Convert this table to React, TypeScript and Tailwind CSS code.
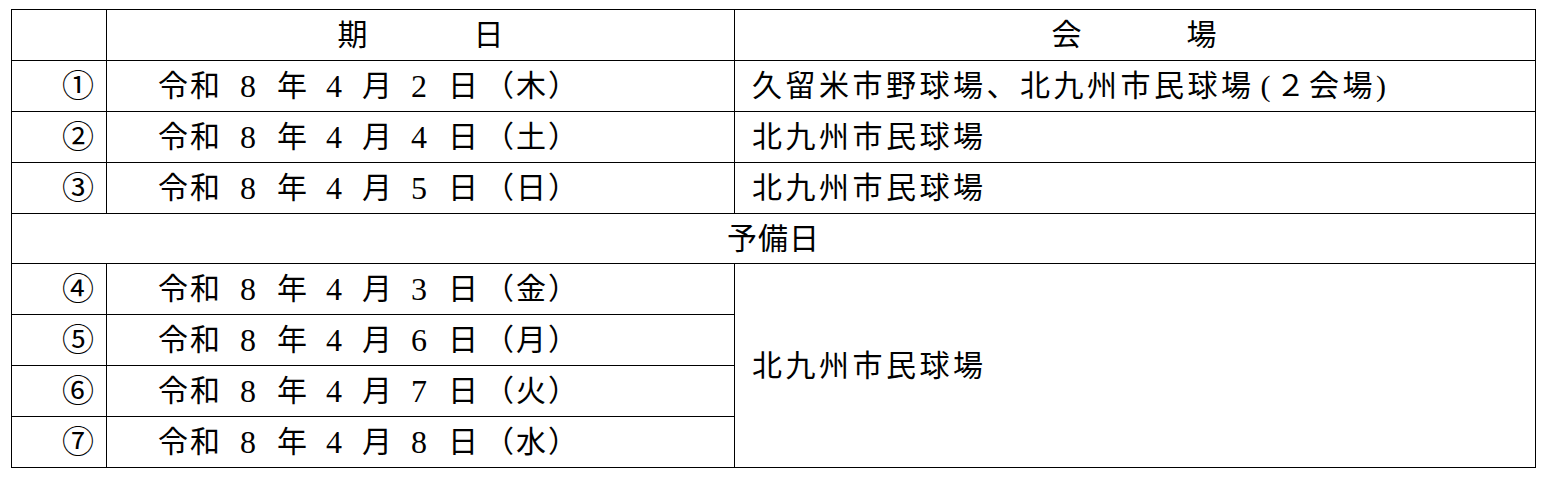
import React from 'react';

type Row = { no: string; day: string; wd: string };

const mainRows: (Row & { venue: React.ReactNode })[] = [
  {
    no: '①',
    day: '2',
    wd: '木',
    venue: (
      <>
        久留米市野球場、北九州市民球場<span className="ml-[6px] tracking-[5px]">(</span>２会場<span>)</span>
      </>
    ),
  },
  { no: '②', day: '4', wd: '土', venue: '北九州市民球場' },
  { no: '③', day: '5', wd: '日', venue: '北九州市民球場' },
];

const spareRows: Row[] = [
  { no: '④', day: '3', wd: '金' },
  { no: '⑤', day: '6', wd: '月' },
  { no: '⑥', day: '7', wd: '火' },
  { no: '⑦', day: '8', wd: '水' },
];

const K = ({ c, className = '' }: { c: string; className?: string }) => (
  <span className={`inline-block w-[32px] text-center ${className}`}>{c}</span>
);
const D = ({ c, className = '' }: { c: string; className?: string }) => (
  <span className={`inline-block w-[16px] text-center text-[32px] ${className}`}>{c}</span>
);

function DateText({ day, wd }: { day: string; wd: string }) {
  return (
    <div className="flex items-center pl-[50px] whitespace-nowrap">
      <K c="令" />
      <K c="和" />
      <D c="8" className="ml-[19px]" />
      <K c="年" className="ml-[20px]" />
      <D c="4" className="ml-[18px]" />
      <K c="月" className="ml-[19px]" />
      <D c={day} className="ml-[18px]" />
      <K c="日" className="ml-[20px]" />
      <K c="（" className="ml-[4px]" />
      <K c={wd} />
      <K c="）" />
    </div>
  );
}

function NoCell({ no }: { no: string }) {
  return (
    <td className="border border-black text-right pr-[12px] text-[32px] leading-none">{no}</td>
  );
}

export default function App() {
  return (
    <div className="w-[1546px] h-[482px] bg-white text-black font-['Liberation_Serif','Noto_Sans_CJK_JP',serif] text-[30px] leading-none">
      <div className="pt-[9px] pl-[11px]">
        <table className="border-collapse table-fixed w-[1524px]">
          <colgroup>
            <col className="w-[95px]" />
            <col className="w-[628px]" />
            <col className="w-[801px]" />
          </colgroup>
          <tbody>
            {/* Header */}
            <tr className="h-[51px]">
              <td className="border border-black" />
              <td className="border border-black">
                <div className="flex justify-center gap-[104px]">
                  <K c="期" />
                  <K c="日" />
                </div>
              </td>
              <td className="border border-black">
                <div className="flex justify-center gap-[103px] pr-[2px]">
                  <K c="会" />
                  <K c="場" />
                </div>
              </td>
            </tr>

            {mainRows.map((r) => (
              <tr key={r.no} className="h-[51px]">
                <NoCell no={r.no} />
                <td className="border border-black">
                  <DateText day={r.day} wd={r.wd} />
                </td>
                <td className="border border-black pl-[17px] tracking-[3.5px] whitespace-nowrap">
                  {r.venue}
                </td>
              </tr>
            ))}

            {/* Spare days */}
            <tr className="h-[50px]">
              <td colSpan={3} className="border border-black text-center tracking-[1px]">
                予備日
              </td>
            </tr>

            {spareRows.map((r, i) => (
              <tr key={r.no} className="h-[51px]">
                <NoCell no={r.no} />
                <td className="border border-black">
                  <DateText day={r.day} wd={r.wd} />
                </td>
                {i === 0 && (
                  <td rowSpan={4} className="border border-black pl-[17px] tracking-[3.5px]">
                    北九州市民球場
                  </td>
                )}
              </tr>
            ))}
          </tbody>
        </table>
      </div>
    </div>
  );
}
